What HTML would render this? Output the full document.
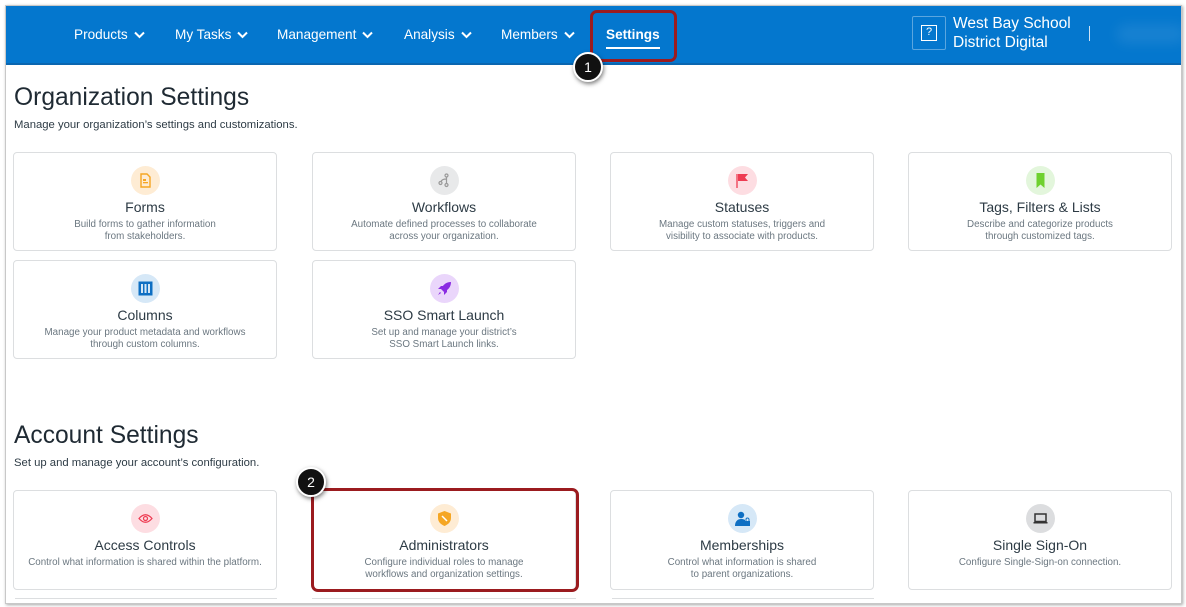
<!DOCTYPE html>
<html><head><meta charset="utf-8"><style>
*{box-sizing:border-box;margin:0;padding:0}
body{width:1186px;height:607px;background:#fff;font-family:"Liberation Sans",sans-serif;position:relative;overflow:hidden;color:#2d3b45}
.frame{position:absolute;left:5px;top:5px;width:1177px;height:599px;border:1px solid #c8c8c8;box-shadow:1px 1px 3px rgba(0,0,0,.35);overflow:hidden;background:#fff}
.nav{position:absolute;left:0;top:0;width:100%;height:59px;background:#0477ce;border-bottom:2px solid #0a66b0}
.ni{position:absolute;top:21px;color:#fff;font-size:13.6px;white-space:nowrap}
.ni svg{vertical-align:middle;margin-left:6px}
.abs{position:absolute}
h1{position:absolute;font-weight:normal;font-size:24.6px;color:#1f2a33}
.sub{position:absolute;font-size:11.3px;color:#2d3b45}
.card{position:absolute;width:264px;height:99px;border:1px solid #dcdee0;border-radius:4px;background:#fff;text-align:center}
.ic{position:absolute;left:117px;top:13px;width:29px;height:29px;border-radius:50%}
.ic svg{position:absolute;left:7px;top:7px}
.t{position:absolute;left:0;right:0;top:46px;font-size:14px;color:#2d3b45}
.d{position:absolute;left:0;right:0;top:66px;font-size:9.8px;line-height:12px;color:#6b7780}
.badge{position:absolute;width:30px;height:30px;border-radius:50%;background:#111;border:2px solid #fff;box-shadow:1px 2px 4px rgba(0,0,0,.5);color:#fff;font-size:14px;text-align:center;line-height:26px}
.red{position:absolute;border:3px solid #9b1b1f;border-radius:7px}
</style></head><body>
<div class="frame">
<div class="nav">
 <div class="ni" style="left:68px">Products<svg width="11" height="8" viewBox="0 0 11 8"><path d="M1 1.5l4.5 4.5 4.5-4.5" stroke="#fff" stroke-width="2" fill="none"/></svg></div>
 <div class="ni" style="left:169px">My Tasks<svg width="11" height="8" viewBox="0 0 11 8"><path d="M1 1.5l4.5 4.5 4.5-4.5" stroke="#fff" stroke-width="2" fill="none"/></svg></div>
 <div class="ni" style="left:271px">Management<svg width="11" height="8" viewBox="0 0 11 8"><path d="M1 1.5l4.5 4.5 4.5-4.5" stroke="#fff" stroke-width="2" fill="none"/></svg></div>
 <div class="ni" style="left:398px">Analysis<svg width="11" height="8" viewBox="0 0 11 8"><path d="M1 1.5l4.5 4.5 4.5-4.5" stroke="#fff" stroke-width="2" fill="none"/></svg></div>
 <div class="ni" style="left:495px">Members<svg width="11" height="8" viewBox="0 0 11 8"><path d="M1 1.5l4.5 4.5 4.5-4.5" stroke="#fff" stroke-width="2" fill="none"/></svg></div>
 <div class="ni" style="left:600px;font-weight:bold">Settings</div>
 <div class="abs" style="left:600px;top:41px;width:54px;height:2px;background:#fff"></div>
 <div class="abs" style="left:906px;top:10px;width:34px;height:34px;border:1px solid rgba(255,255,255,.35);border-radius:2px"></div>
 <div class="abs" style="left:915px;top:19px;width:16px;height:16px;border:1.5px solid #fff;color:#fff;font-size:11px;text-align:center;line-height:13px">?</div>
 <div class="abs" style="left:947px;top:8px;color:#fff;font-size:15.5px;line-height:19px">West Bay School<br>District Digital</div>
 <div class="abs" style="left:1083px;top:20px;width:1px;height:15px;background:#cfe3f5"></div>
 <div class="abs" style="left:1110px;top:18px;width:70px;height:20px;background:rgba(255,255,255,.08);filter:blur(6px);border-radius:10px"></div>
</div>
<div class="red" style="left:584px;top:4px;width:87px;height:52px"></div>
<div class="badge" style="left:567px;top:46px">1</div>

<h1 style="left:8px;top:78px">Organization Settings</h1>
<div class="sub" style="left:8px;top:113px">Manage your organization’s settings and customizations.</div>

<div class="card" style="left:7px;top:146px"><div class="ic" style="background:#feecd4"><svg width="15" height="15" viewBox="0 0 15 15"><path d="M3 1h6l3 3v10H3z" fill="none" stroke="#f5a623" stroke-width="1.4"/><rect x="5" y="6" width="3" height="2" fill="#f5a623"/><rect x="5" y="9" width="5" height="1.3" fill="#f5a623"/></svg></div><div class="t">Forms</div><div class="d">Build forms to gather information<br>from stakeholders.</div></div>
<div class="card" style="left:306px;top:146px"><div class="ic" style="background:#e8e9ea"><svg width="15" height="15" viewBox="0 0 15 15"><circle cx="9.5" cy="2.5" r="1.5" fill="none" stroke="#999" stroke-width="1.2"/><circle cx="9.5" cy="12" r="1.5" fill="none" stroke="#999" stroke-width="1.2"/><circle cx="3.5" cy="10" r="1.5" fill="none" stroke="#999" stroke-width="1.2"/><path d="M9.5 4v6.5M9.5 6Q5 6 4 8.5" fill="none" stroke="#999" stroke-width="1.2"/></svg></div><div class="t">Workflows</div><div class="d">Automate defined processes to collaborate<br>across your organization.</div></div>
<div class="card" style="left:604px;top:146px"><div class="ic" style="background:#fddde2"><svg width="15" height="15" viewBox="0 0 15 15"><path d="M2 1v14" stroke="#ee3b52" stroke-width="1.3"/><path d="M3 1h10l-3 3.5 3 3.5H3z" fill="#ee3b52"/></svg></div><div class="t">Statuses</div><div class="d">Manage custom statuses, triggers and<br>visibility to associate with products.</div></div>
<div class="card" style="left:902px;top:146px"><div class="ic" style="background:#e3f6dc"><svg width="15" height="15" viewBox="0 0 15 15"><path d="M3.5 0h8v15l-4-3.5-4 3.5z" fill="#6fd12f"/></svg></div><div class="t">Tags, Filters &amp; Lists</div><div class="d">Describe and categorize products<br>through customized tags.</div></div>
<div class="card" style="left:7px;top:254px"><div class="ic" style="background:#d6e8f7"><svg width="15" height="15" viewBox="0 0 15 15"><rect x="0.5" y="0.5" width="14" height="14" fill="#0e6fc3"/><rect x="3" y="3" width="2" height="9" fill="#d6e8f7"/><rect x="6.5" y="3" width="2" height="9" fill="#d6e8f7"/><rect x="10" y="3" width="2" height="9" fill="#d6e8f7"/></svg></div><div class="t">Columns</div><div class="d">Manage your product metadata and workflows<br>through custom columns.</div></div>
<div class="card" style="left:306px;top:254px"><div class="ic" style="background:#ead6fb"><svg width="15" height="15" viewBox="0 0 15 15"><path d="M14 1C9 1 6 4 4 8l3 3c4-2 7-5 7-10z" fill="#8a2be2"/><path d="M4 8L1 8l3-3h3M7 11v3l3-3V8" fill="#8a2be2"/><path d="M3 11l-2 3 3-2" fill="#8a2be2"/></svg></div><div class="t">SSO Smart Launch</div><div class="d">Set up and manage your district’s<br>SSO Smart Launch links.</div></div>

<h1 style="left:8px;top:416px">Account Settings</h1>
<div class="sub" style="left:8px;top:451px">Set up and manage your account’s configuration.</div>

<div class="card" style="left:7px;top:484px;height:100px"><div class="ic" style="background:#fddde2"><svg width="15" height="15" viewBox="0 0 15 15"><path d="M1 7.5Q7.5 0 14 7.5Q7.5 15 1 7.5z" fill="none" stroke="#ee3b52" stroke-width="1.2"/><circle cx="7.5" cy="7.5" r="2" fill="none" stroke="#ee3b52" stroke-width="1.2"/></svg></div><div class="t">Access Controls</div><div class="d">Control what information is shared within the platform.</div></div>
<div class="card" style="left:306px;top:484px;height:100px"><div class="ic" style="background:#feecd4"><svg width="15" height="15" viewBox="0 0 15 15"><path d="M7.5 0L14 2.5V7c0 4-3 6.5-6.5 8C4 13.5 1 11 1 7V2.5z" fill="#f5a623"/><path d="M5 5l5 5" stroke="#fff" stroke-width="1.5"/></svg></div><div class="t">Administrators</div><div class="d">Configure individual roles to manage<br>workflows and organization settings.</div></div>
<div class="card" style="left:604px;top:484px;height:100px"><div class="ic" style="background:#d6e8f7"><svg width="15" height="15" viewBox="0 0 15 15"><circle cx="6" cy="4" r="3.2" fill="#0e6fc3"/><path d="M0 15c0-5 3-7 6-7s4 1 4 1v6z" fill="#0e6fc3"/><rect x="10" y="10" width="5" height="5" fill="#0e6fc3"/><path d="M11 10V8.5a1.5 1.5 0 013 0V10" fill="none" stroke="#0e6fc3" stroke-width="1"/></svg></div><div class="t">Memberships</div><div class="d">Control what information is shared<br>to parent organizations.</div></div>
<div class="card" style="left:902px;top:484px;height:100px"><div class="ic" style="background:#dcdddf"><svg width="15" height="15" viewBox="0 0 15 15"><rect x="2" y="3" width="11" height="7.5" fill="none" stroke="#333" stroke-width="1.5"/><rect x="0.5" y="11" width="14" height="1.5" fill="#333"/></svg></div><div class="t">Single Sign-On</div><div class="d">Configure Single-Sign-on connection.</div></div>
<div class="abs" style="left:9px;top:592px;width:262px;height:1px;background:#dcdee0"></div>
<div class="abs" style="left:306px;top:592px;width:264px;height:1px;background:#dcdee0"></div>
<div class="abs" style="left:606px;top:592px;width:262px;height:1px;background:#dcdee0"></div>
<div class="red" style="left:305px;top:482px;width:268px;height:104px"></div>
<div class="badge" style="left:290px;top:461px">2</div>
</div>
</body></html>
